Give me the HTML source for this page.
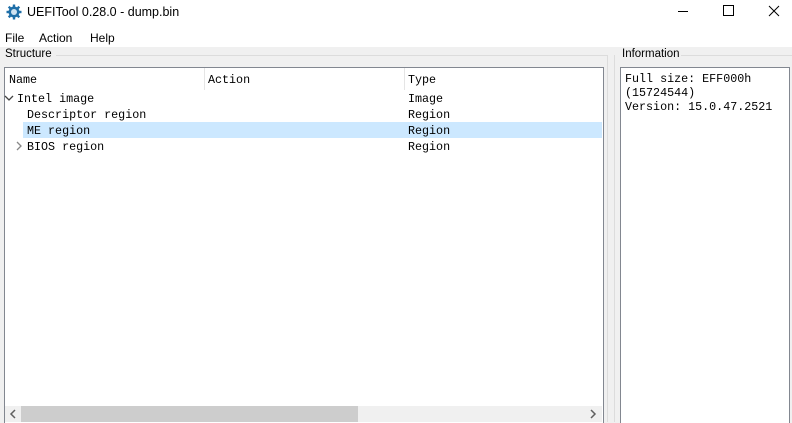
<!DOCTYPE html>
<html><head><style>
body{margin:0;width:792px;height:422px;overflow:hidden;background:#f0f0f0;font-family:"Liberation Sans",sans-serif;font-size:12px;color:#000;position:relative}
.a{position:absolute}
.mono{font-family:"Liberation Mono",monospace;font-size:11.7px}
</style></head><body>
<div class="a" style="left:0;top:0;width:792px;height:47px;background:#fff"></div>
<svg class="a" style="left:6px;top:4px" width="16" height="16" viewBox="0 0 16 16"><circle cx="8" cy="8" r="5.5" fill="#1f6fa8"/><g stroke="#1f6fa8" stroke-width="2.4"><line x1="8" y1="0.5" x2="8" y2="15.5"/><line x1="0.5" y1="8" x2="15.5" y2="8"/><line x1="2.7" y1="2.7" x2="13.3" y2="13.3"/><line x1="13.3" y1="2.7" x2="2.7" y2="13.3"/></g><circle cx="8" cy="8" r="3" fill="#cfe3f2"/></svg>
<div class="a" style="left:27px;top:5px;font-size:12.5px">UEFITool 0.28.0 - dump.bin</div>
<div class="a" style="left:678px;top:11px;width:10px;height:1px;background:#000"></div>
<div class="a" style="left:723px;top:5px;width:9px;height:9px;border:1px solid #000"></div>
<svg class="a" style="left:768px;top:5px" width="12" height="12"><path d="M1 1L11 11M11 1L1 11" stroke="#000" stroke-width="1"/></svg>
<div class="a" style="left:5px;top:31px">File</div>
<div class="a" style="left:39px;top:31px">Action</div>
<div class="a" style="left:90px;top:31px">Help</div>
<div class="a" style="left:5px;top:48px;font-size:11.5px">Structure</div>
<div class="a" style="left:56px;top:55px;width:552px;height:1px;background:#dcdcdc"></div>
<div class="a" style="left:607px;top:55px;width:1px;height:367px;background:#dcdcdc"></div>
<div class="a" style="left:4px;top:67px;width:598px;height:355px;background:#fff;border:1px solid #828790;border-bottom:none"></div>
<div class="a" style="left:204px;top:68px;width:1px;height:22px;background:#e5e5e5"></div>
<div class="a" style="left:404px;top:68px;width:1px;height:22px;background:#e5e5e5"></div>
<div class="a mono" style="left:9px;top:73px">Name</div>
<div class="a mono" style="left:208px;top:73px">Action</div>
<div class="a mono" style="left:408px;top:73px">Type</div>
<div class="a" style="left:23px;top:122px;width:579px;height:16px;background:#cce8ff"></div>
<svg class="a" style="left:4px;top:94px" width="10" height="8"><path d="M1 2L5 6L9 2" fill="none" stroke="#444" stroke-width="1.3"/></svg>
<svg class="a" style="left:15px;top:141px" width="8" height="10"><path d="M2 1L6 5L2 9" fill="none" stroke="#888" stroke-width="1.3"/></svg>
<div class="a mono" style="left:17px;top:92px">Intel image</div>
<div class="a mono" style="left:27px;top:108px">Descriptor region</div>
<div class="a mono" style="left:27px;top:124px">ME region</div>
<div class="a mono" style="left:27px;top:140px">BIOS region</div>
<div class="a mono" style="left:408px;top:92px">Image</div>
<div class="a mono" style="left:408px;top:108px">Region</div>
<div class="a mono" style="left:408px;top:124px">Region</div>
<div class="a mono" style="left:408px;top:140px">Region</div>
<div class="a" style="left:5px;top:406px;width:597px;height:16px;background:#f0f0f0"></div>
<div class="a" style="left:21px;top:406px;width:337px;height:16px;background:#cdcdcd"></div>
<svg class="a" style="left:9px;top:409px" width="8" height="10"><path d="M6 1L2 5L6 9" fill="none" stroke="#606060" stroke-width="1.5"/></svg>
<svg class="a" style="left:589px;top:409px" width="8" height="10"><path d="M2 1L6 5L2 9" fill="none" stroke="#606060" stroke-width="1.5"/></svg>
<div class="a" style="left:622px;top:48px;font-size:11.5px">Information</div>
<div class="a" style="left:614px;top:55px;width:1px;height:367px;background:#dcdcdc"></div>
<div class="a" style="left:681px;top:55px;width:111px;height:1px;background:#dcdcdc"></div>
<div class="a" style="left:620px;top:67px;width:168px;height:355px;background:#fff;border:1px solid #828790;border-bottom:none"></div>
<div class="a mono" style="left:625px;top:72px;line-height:14px">Full size: EFF000h<br>(15724544)<br>Version: 15.0.47.2521</div>
</body></html>
